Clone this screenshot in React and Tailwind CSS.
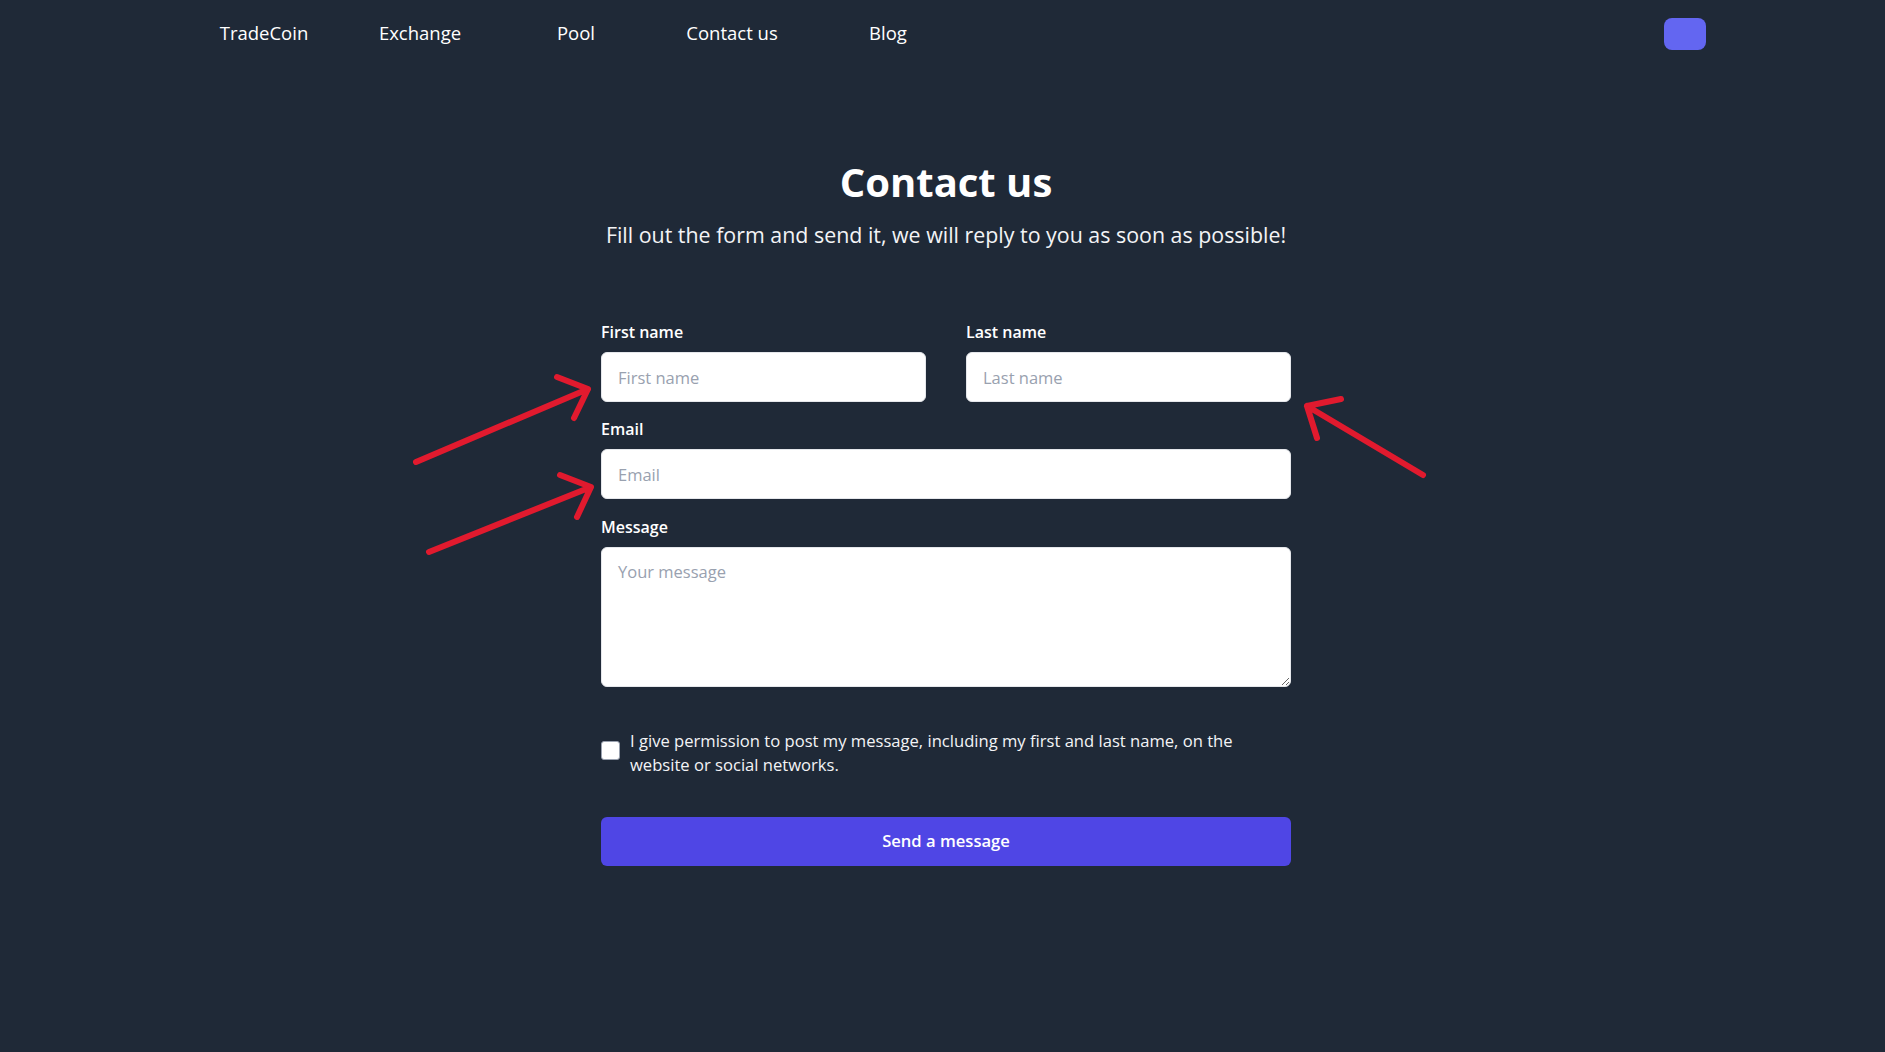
import { useState } from "react";

const links = ["TradeCoin", "Exchange", "Pool", "Contact us", "Blog"];

function Arrows() {
  return (
    <svg
      className="absolute inset-0 pointer-events-none"
      width="1885"
      height="1052"
      viewBox="0 0 1885 1052"
    >
      <g stroke="#e11a2e" strokeWidth="6" strokeLinecap="round" strokeLinejoin="round" fill="none">
        <path d="M416 462 L588 389 M557 377 L588 389 L574 418" />
        <path d="M429 552 L591 487 M560 475 L591 487 L577 517" />
        <path d="M1423 475 L1307 406 M1341 399 L1307 406 L1317 438" />
      </g>
    </svg>
  );
}

export default function App() {
  const [agree, setAgree] = useState(false);

  return (
    <div className="relative min-h-screen bg-[#1f2937] text-white font-['Open_Sans',sans-serif]">
      <nav className="flex items-center h-[66px] pl-[186px] pr-[179px]">
        {links.map((l) => (
          <a key={l} href="#" className="w-[156px] text-center text-[18.5px] leading-7">
            {l}
          </a>
        ))}
        <button className="ml-auto mt-[2px] w-[42px] h-[32px] rounded-lg bg-[#6366f1]"></button>
      </nav>

      <main className="flex flex-col items-center pl-[7px]">
        <h1 className="mt-[90px] text-[40px] leading-[52px] font-bold">Contact us</h1>
        <p className="mt-[12px] text-[21.4px] leading-[30px] text-gray-100">
          Fill out the form and send it, we will reply to you as soon as possible!
        </p>

        <form className="w-[690px] mt-[70px]" onSubmit={(e) => e.preventDefault()}>
          <div className="grid grid-cols-2 gap-x-10">
            <div>
              <label className="block text-[16px] leading-6 font-semibold">First name</label>
              <input
                placeholder="First name"
                className="mt-2 w-full h-[50px] px-4 rounded-md bg-white border border-gray-200 text-[16.5px] text-gray-900 placeholder:text-gray-400"
              />
            </div>
            <div>
              <label className="block text-[16px] leading-6 font-semibold">Last name</label>
              <input
                placeholder="Last name"
                className="mt-2 w-full h-[50px] px-4 rounded-md bg-white border border-gray-200 text-[16.5px] text-gray-900 placeholder:text-gray-400"
              />
            </div>
          </div>

          <label className="block mt-[15px] text-[16px] leading-6 font-semibold">Email</label>
          <input
            placeholder="Email"
            className="mt-2 w-full h-[50px] px-4 rounded-md bg-white border border-gray-200 text-[16.5px] text-gray-900 placeholder:text-gray-400"
          />

          <label className="block mt-4 text-[16px] leading-6 font-semibold">Message</label>
          <textarea
            placeholder="Your message"
            className="mt-2 block w-full h-[140px] px-4 py-3 rounded-md bg-white border border-gray-200 text-[16.5px] text-gray-900 placeholder:text-gray-400"
          />

          <div className="flex items-start gap-[10px] mt-[42px]">
            <input
              type="checkbox"
              checked={agree}
              onChange={() => setAgree(!agree)}
              className="appearance-none shrink-0 mt-[12px] w-[19px] h-[19px] rounded-[3px] bg-white border border-gray-400"
            />
            <span className="text-[16.6px] leading-6 text-gray-100 pr-6">
              I give permission to post my message, including my first and last name, on the website or social networks.
            </span>
          </div>

          <button
            type="submit"
            className="mt-10 w-full h-[49px] rounded-md bg-[#4f46e5] text-[16.6px] font-semibold"
          >
            Send a message
          </button>
        </form>
      </main>

      <Arrows />
    </div>
  );
}
